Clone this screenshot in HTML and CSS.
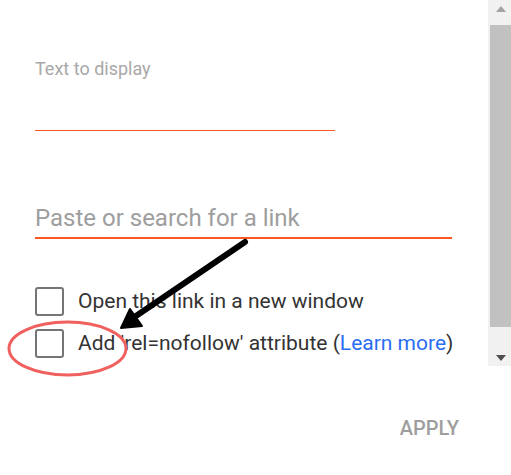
FILE: index.html
```html
<!DOCTYPE html>
<html>
<head>
<meta charset="utf-8">
<link rel="stylesheet" href="styles.css">
</head>
<body>
<div class="page">
  <div class="dialog">
    <div class="field f1"><div class="label">Text to display</div></div>
    <div class="field f2"><div class="placeholder">Paste or search for a link</div></div>
    <div class="options">
      <div class="opt"><span class="box"></span><span class="opt-text">Open this link in a new window</span></div>
      <div class="opt"><span class="box"></span><span class="opt-text">Add 'rel=nofollow' attribute (<a class="link">Learn more</a>)</span></div>
    </div>
    <div class="actions"><span class="apply">APPLY</span></div>
  </div>
  <div class="scrollbar">
    <div class="sb-btn"><span class="tri-up"></span></div>
    <div class="sb-gap-top"></div>
    <div class="sb-thumb"></div>
    <div class="sb-gap-bottom"></div>
    <div class="sb-btn"><span class="tri-down"></span></div>
  </div>
  <svg class="annot" width="511" height="475" viewBox="0 0 511 475">
    <ellipse cx="67.5" cy="348.5" rx="58.5" ry="26.5" fill="none" stroke="#f0605f" stroke-width="3"/>
    <line x1="245" y1="242" x2="133" y2="318" stroke="#000" stroke-width="6" stroke-linecap="round"/>
    <polygon points="121,328 130,309 142,326" fill="#000" stroke="#000" stroke-width="2" stroke-linejoin="round"/>
  </svg>
</div>
</body>
</html>
```
FILE: styles.css
```css
* { box-sizing: border-box; }
html, body { margin: 0; padding: 0; background: #fff; }
body { font-family: Roboto, "Noto Sans", sans-serif; }
.page {
  position: relative;
  width: 511px;
  height: 475px;
  display: flex;
  align-items: flex-start;
  overflow: hidden;
}
.dialog {
  flex: 1;
  padding: 58px 0 0 35px;
  display: flex;
  flex-direction: column;
}
.field { border-bottom: 1px solid #ff5722; }
.f1 { width: 300px; height: 73px; }
.label { font-size: 18px; line-height: 22px; color: #a8a8a8; }
.f2 {
  width: 417px;
  height: 35px;
  margin-top: 73px;
  border-bottom: 2px solid #ff5722;
}
.placeholder { font-size: 24px; line-height: 28px; color: #9e9e9e; }
.options {
  margin-top: 48px;
  display: flex;
  flex-direction: column;
  gap: 13px;
}
.opt {
  display: flex;
  align-items: center;
  height: 29px;
  gap: 14px;
  font-size: 21px;
  color: #333;
}
.box {
  width: 29px;
  height: 29px;
  border: 2.5px solid #757575;
  border-radius: 3px;
  flex: none;
}
.opt-text { line-height: 27px; white-space: nowrap; }
.link { color: #2a6df4; }
.actions {
  display: flex;
  justify-content: flex-end;
  padding-right: 29px;
  margin-top: 58px;
}
.apply {
  font-size: 20px;
  font-weight: 500;
  color: #9e9e9e;
  line-height: 24px;
}
.scrollbar {
  width: 23px;
  height: 366px;
  background: #f1f1f1;
  display: flex;
  flex-direction: column;
  flex: none;
}
.sb-btn {
  height: 17px;
  display: flex;
  align-items: center;
  justify-content: center;
  padding-left: 2px;
}
.sb-gap-top { height: 8px; }
.sb-thumb { height: 302px; margin-left: 2px; background: #c1c1c1; }
.sb-gap-bottom { height: 22px; }
.tri-up {
  width: 0; height: 0;
  border-left: 5.5px solid transparent;
  border-right: 5.5px solid transparent;
  border-bottom: 6px solid #a3a3a3;
}
.tri-down {
  width: 0; height: 0;
  border-left: 5.5px solid transparent;
  border-right: 5.5px solid transparent;
  border-top: 6px solid #505050;
}
.annot {
  position: absolute;
  left: 0;
  top: 0;
  pointer-events: none;
}
```
